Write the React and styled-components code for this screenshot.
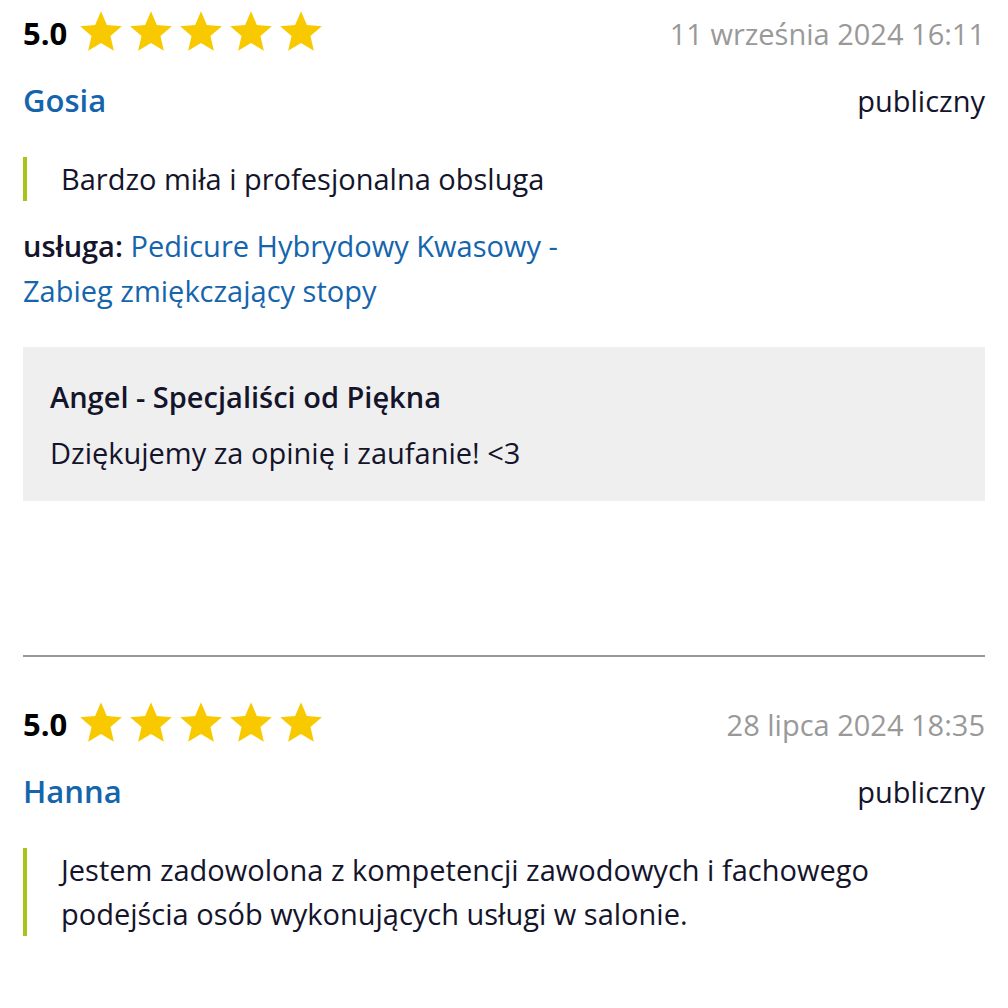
import { createGlobalStyle, styled } from 'styled-components';

const GlobalStyle = createGlobalStyle`
  body {
    margin: 0;
    background: #fff;
    font-family: 'Open Sans', 'Noto Sans', sans-serif;
    color: #14142b;
  }
`;

const reviews = [
  {
    id: 1,
    rating: '5.0',
    date: '11 września 2024 16:11',
    author: 'Gosia',
    text: 'Bardzo miła i profesjonalna obsluga',
    service: 'Pedicure Hybrydowy Kwasowy - Zabieg zmiękczający stopy',
    reply: {
      author: 'Angel - Specjaliści od Piękna',
      text: 'Dziękujemy za opinię i zaufanie! <3',
    },
  },
  {
    id: 2,
    rating: '5.0',
    date: '28 lipca 2024 18:35',
    author: 'Hanna',
    text: 'Jestem zadowolona z kompetencji zawodowych i fachowego podejścia osób wykonujących usługi w salonie.',
  },
];

function Star() {
  return (
    <svg width="50" height="50" viewBox="0 0 24 24">
      <path
        fill="#f9c900"
        d="M12 17.27L18.18 21l-1.64-7.03L22 9.24l-7.19-.61L12 2 9.19 8.63 2 9.24l5.46 4.73L5.82 21z"
      />
    </svg>
  );
}

function Review({ review }) {
  return (
    <Item>
      <TopRow>
        <Rating>
          <Score>{review.rating}</Score>
          <Stars>
            {[0, 1, 2, 3, 4].map((i) => (
              <Star key={i} />
            ))}
          </Stars>
        </Rating>
        <DateText>{review.date}</DateText>
      </TopRow>

      <NameRow>
        <Author>{review.author}</Author>
        <Visibility>publiczny</Visibility>
      </NameRow>

      <Quote>{review.text}</Quote>

      {review.service && (
        <Service>
          <strong>usługa:</strong> <a href="#">{review.service}</a>
        </Service>
      )}

      {review.reply && (
        <Reply>
          <ReplyAuthor>{review.reply.author}</ReplyAuthor>
          <ReplyText>{review.reply.text}</ReplyText>
        </Reply>
      )}
    </Item>
  );
}

export default function App() {
  return (
    <>
      <GlobalStyle />
      <List>
        {reviews.map((review, index) => (
          <div key={review.id}>
            {index > 0 && <Divider />}
            <Review review={review} />
          </div>
        ))}
      </List>
    </>
  );
}

const List = styled.main`
  padding: 11px 23px 0;
`;

const Item = styled.article`
  display: flex;
  flex-direction: column;
`;

const TopRow = styled.div`
  display: flex;
  align-items: center;
  justify-content: space-between;
  height: 44px;
`;

const Rating = styled.div`
  display: flex;
  align-items: center;
  gap: 9px;
`;

const Score = styled.span`
  font-size: 31px;
  font-weight: 700;
  color: #000;
`;

const Stars = styled.div`
  display: flex;
  margin-top: -2px;
`;

const DateText = styled.span`
  font-size: 29px;
  color: #999;
`;

const NameRow = styled.div`
  display: flex;
  align-items: center;
  justify-content: space-between;
  height: 44px;
  margin-top: 23px;
`;

const Author = styled.span`
  font-size: 31px;
  font-weight: 600;
  color: #1565ad;
`;

const Visibility = styled.span`
  font-size: 29px;
  color: #14142b;
`;

const Quote = styled.p`
  margin: 35px 0 0;
  padding-left: 34px;
  border-left: 4px solid #a9c41a;
  font-size: 29px;
  line-height: 44px;
`;

const Service = styled.p`
  margin: 22px 0 0;
  max-width: 570px;
  font-size: 29px;
  line-height: 45px;

  strong {
    font-weight: 600;
  }

  a {
    color: #1565ad;
    text-decoration: none;
  }
`;

const Reply = styled.div`
  margin-top: 34px;
  padding: 28px 27px 26px;
  background: #efefef;
`;

const ReplyAuthor = styled.div`
  font-size: 29px;
  font-weight: 600;
  line-height: 44px;
`;

const ReplyText = styled.div`
  margin-top: 12px;
  font-size: 29px;
  line-height: 44px;
`;

const Divider = styled.hr`
  margin: 154px 0 45px;
  border: none;
  height: 2px;
  background: #999;
`;
